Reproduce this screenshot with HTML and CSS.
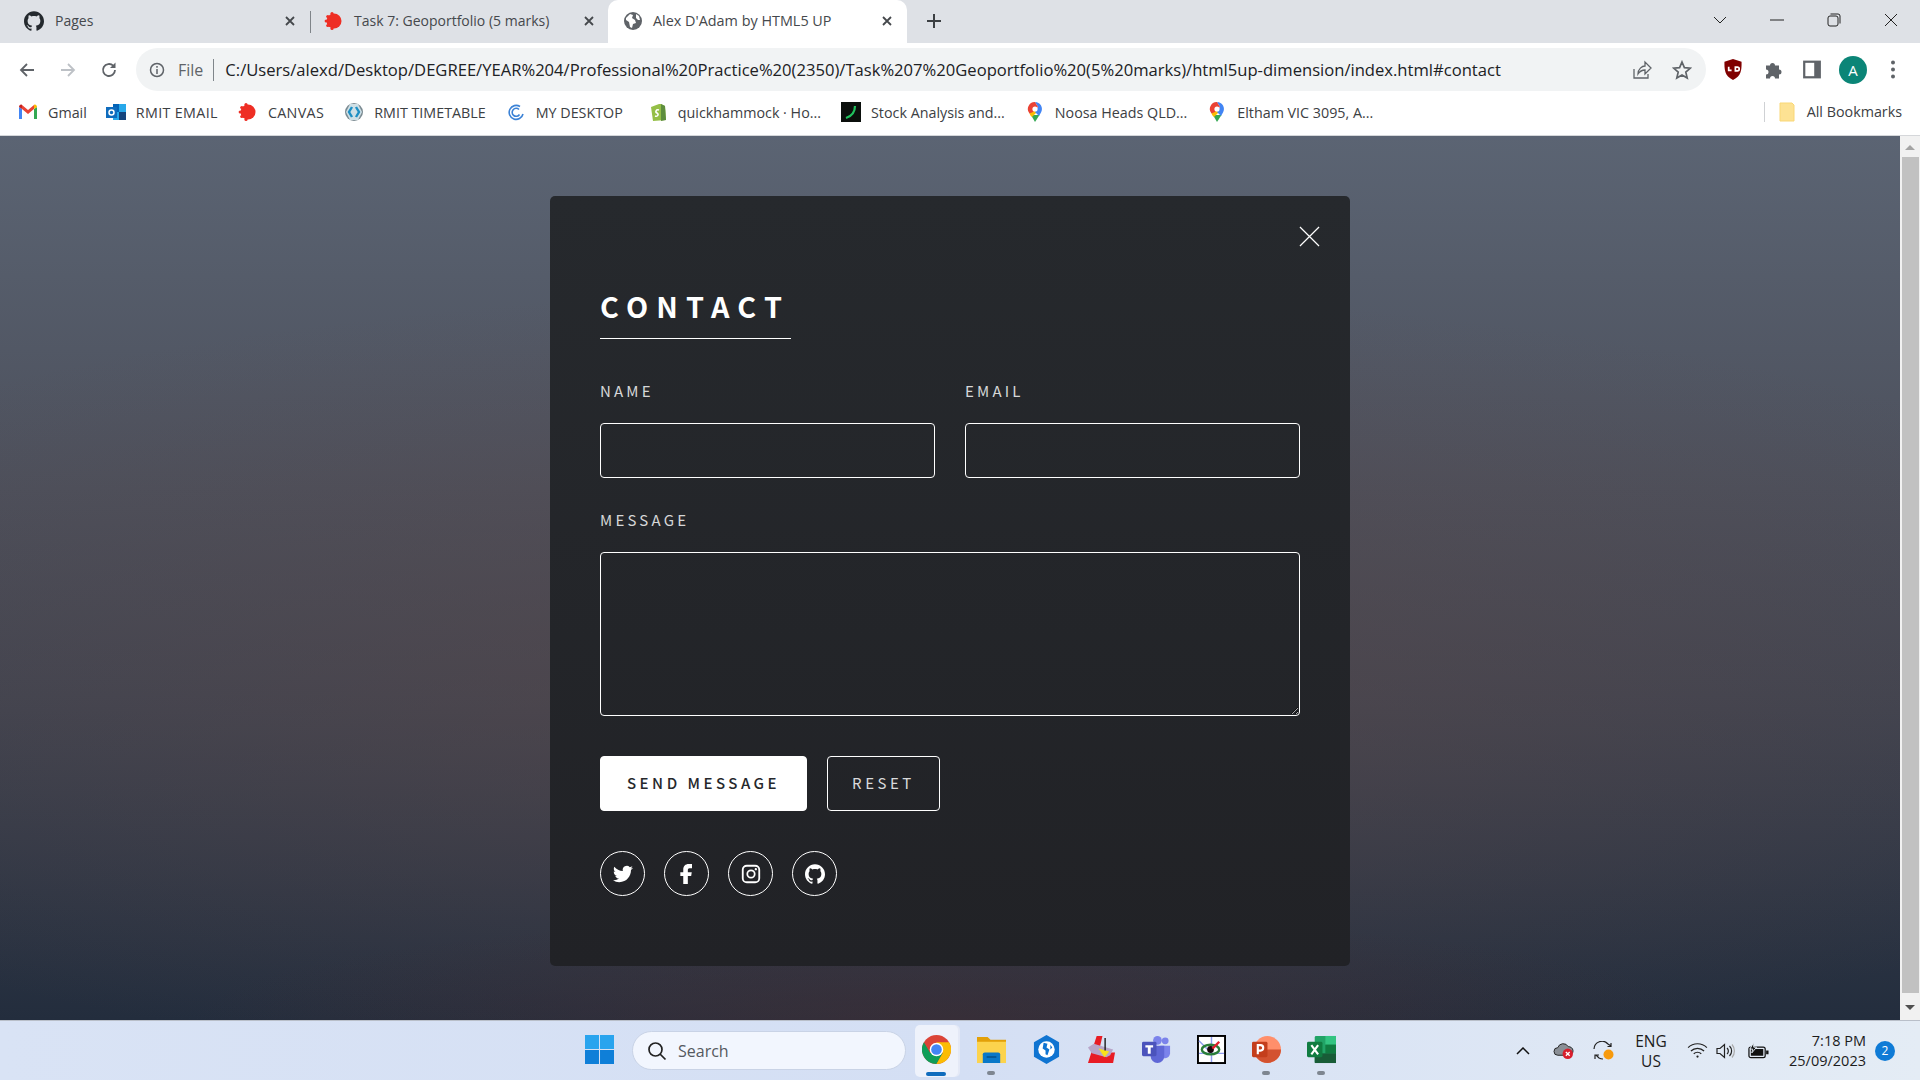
FILE: index.html
```html
<!DOCTYPE html>
<html lang="en">
<head>
  <meta charset="UTF-8" />
  <title>Alex D'Adam by HTML5 UP</title>
  <link rel="stylesheet" href="styles.css">
</head>
<body>

  <!-- tab strip -->
  <div class="tabbar">
    <div class="tab first">
      <svg class="tab-icon" viewBox="0 0 24 24"><path fill="#24292e" d="M12 .297c-6.63 0-12 5.373-12 12 0 5.303 3.438 9.8 8.205 11.385.6.113.82-.258.82-.577 0-.285-.01-1.04-.015-2.04-3.338.724-4.042-1.61-4.042-1.61C4.422 18.07 3.633 17.7 3.633 17.7c-1.087-.744.084-.729.084-.729 1.205.084 1.838 1.236 1.838 1.236 1.07 1.835 2.809 1.305 3.495.998.108-.776.417-1.305.76-1.605-2.665-.3-5.466-1.332-5.466-5.93 0-1.31.465-2.38 1.235-3.22-.135-.303-.54-1.523.105-3.176 0 0 1.005-.322 3.3 1.23.96-.267 1.98-.399 3-.405 1.02.006 2.04.138 3 .405 2.28-1.552 3.285-1.23 3.285-1.23.645 1.653.24 2.873.12 3.176.765.84 1.23 1.91 1.23 3.22 0 4.61-2.805 5.625-5.475 5.92.42.36.81 1.096.81 2.22 0 1.606-.015 2.896-.015 3.286 0 .315.21.69.825.57C20.565 22.092 24 17.592 24 12.297c0-6.627-5.373-12-12-12"/></svg>
      <span class="tab-title">Pages</span>
      <svg class="tab-close" viewBox="0 0 12 12"><path d="M2 2l8 8M10 2l-8 8"/></svg>
    </div>
    <div class="tab-sep"></div>
    <div class="tab second">
      <svg class="tab-icon" viewBox="0 0 20 20"><use href="#canvas"/></svg>
      <span class="tab-title">Task 7: Geoportfolio (5 marks)</span>
      <svg class="tab-close" viewBox="0 0 12 12"><path d="M2 2l8 8M10 2l-8 8"/></svg>
    </div>
    <div class="tab active">
      <svg class="tab-icon" viewBox="0 0 20 20"><circle cx="10" cy="10" r="9" fill="#5f6368"/><path fill="#fff" d="M3 7l4-4 3 1-1 3 3 2 1 3-3 1-1 4-2-1-1-5-3-2zM13 3l3 2 1 4-2 0-2-2z"/></svg>
      <span class="tab-title">Alex D'Adam by HTML5 UP</span>
      <svg class="tab-close" viewBox="0 0 12 12"><path d="M2 2l8 8M10 2l-8 8"/></svg>
    </div>
    <svg class="new-tab" viewBox="0 0 16 16"><path d="M8 1v14M1 8h14"/></svg>
    <div class="win-controls">
      <svg viewBox="0 0 14 14"><path d="M1 4l6 6 6-6"/></svg>
      <svg viewBox="0 0 14 14"><path d="M0 7h14"/></svg>
      <svg viewBox="0 0 14 14"><rect x="1" y="3" width="10" height="10" rx="2"/><path d="M3.5 1h7.5a2 2 0 0 1 2 2v7.5"/></svg>
      <svg viewBox="0 0 14 14"><path d="M1 1l12 12M13 1L1 13"/></svg>
    </div>
  </div>

  <!-- address bar -->
  <div class="toolbar">
    <svg class="nav-icon" viewBox="0 0 18 18"><path d="M16 9H3M9 3L3 9l6 6"/></svg>
    <svg class="nav-icon off" viewBox="0 0 18 18"><path d="M2 9h13M9 3l6 6-6 6"/></svg>
    <svg class="nav-icon" viewBox="0 0 18 18"><path d="M15 9a6 6 0 1 1-1.8-4.3"/><path class="solid" d="M15.5 1.5v5.5h-5.5z"/></svg>
    <div class="omnibox">
      <svg class="info" viewBox="0 0 16 16"><circle cx="8" cy="8" r="6.5"/><path d="M8 7v5M8 4v1.8"/></svg>
      <span class="scheme">File</span>
      <span class="url">C:/Users/alexd/Desktop/DEGREE/YEAR%204/Professional%20Practice%20(2350)/Task%207%20Geoportfolio%20(5%20marks)/html5up-dimension/index.html#contact</span>
      <svg class="omni-icon share" viewBox="0 0 20 20"><path d="M2 9v9h14v-4M6 14c0-5 4-8 7-8V2l6 6-6 6v-4c-3 0-5 1-7 4z"/></svg>
      <svg class="omni-icon star" viewBox="0 0 20 20"><path d="M10 2l2.4 5.6 6 .5-4.6 4 1.4 6L10 15l-5.2 3.1 1.4-6-4.6-4 6-.5z"/></svg>
    </div>
    <div class="ext-icons">
      <svg viewBox="0 0 20 22"><path fill="#800000" d="M10 0l9 3c0 8 0 15-9 19C1 18 1 11 1 3z"/><path fill="none" stroke="#fff" stroke-width="1.8" d="M5.5 8v4h3M12.5 8.5h2a1.5 1.5 0 0 1 0 4h-2z"/></svg>
      <svg viewBox="0 0 20 20"><path fill="#5f6368" d="M2 6h4a2.5 2.5 0 1 1 5 0h4v4a2.5 2.5 0 1 1 0 5v4h-4a2.5 2.5 0 1 0-5 0H2v-4a2.5 2.5 0 1 0 0-5z"/></svg>
      <svg viewBox="0 0 18 18"><rect x="1" y="1" width="16" height="16" fill="#5f6368"/><rect x="3" y="3" width="8" height="12" fill="#fff"/></svg>
      <div class="avatar">A</div>
      <svg viewBox="0 0 6 20"><circle cx="3" cy="3" r="2" fill="#5f6368"/><circle cx="3" cy="10" r="2" fill="#5f6368"/><circle cx="3" cy="17" r="2" fill="#5f6368"/></svg>
    </div>
  </div>

  <!-- bookmarks -->
  <div class="bookmarks">
    <div class="bookmark gmail">
      <svg viewBox="0 0 20 16"><path fill="#4285f4" d="M1 15V3l3 2v10z"/><path fill="#34a853" d="M19 15V3l-3 2v10z"/><path fill="#ea4335" d="M4 5V1l6 5 6-5v4l-6 5z"/><path fill="#c5221f" d="M1 3c0-2 2-3 3-2v4z"/><path fill="#fbbc04" d="M19 3c0-2-2-3-3-2v4z"/></svg>
      <span>Gmail</span>
    </div>
    <div class="bookmark wide">
      <svg viewBox="0 0 20 20"><rect x="7" y="2" width="13" height="16" fill="#28a8ea"/><rect x="7" y="2" width="6" height="8" fill="#0364b8"/><rect x="13" y="10" width="7" height="8" fill="#14447d"/><rect x="0" y="5" width="11" height="11" fill="#0f6cbd"/><circle cx="5.5" cy="10.5" r="2.5" fill="none" stroke="#fff" stroke-width="1.5"/></svg>
      <span>RMIT EMAIL</span>
    </div>
    <div class="bookmark wide">
      <svg viewBox="0 0 20 20"><use href="#canvas"/></svg>
      <span>CANVAS</span>
    </div>
    <div class="bookmark">
      <svg viewBox="0 0 20 20"><circle cx="10" cy="10" r="9" fill="#7b8b92"/><path fill="#cfe0e6" d="M6 2h8l4 8-4 8H6l-4-8z"/><path fill="none" stroke="#1d8fc4" stroke-width="2.4" d="M8 5l-3 5 3 5M12 5l3 5-3 5"/></svg>
      <span>RMIT TIMETABLE</span>
    </div>
    <div class="bookmark">
      <svg viewBox="0 0 20 20" fill="none" stroke="#3b82d6" stroke-width="1.6"><path d="M14 4.5A7 7 0 1 0 17 12"/><path d="M13 7.5a4 4 0 1 0 .5 5"/></svg>
      <span>MY DESKTOP</span>
    </div>
    <div class="bookmark shop">
      <svg viewBox="0 0 20 20"><path fill="#95bf47" d="M3 5l8-3 2 0 4 2 1 14-13 1z"/><path fill="#5e8e3e" d="M13 2l4 2 1 14-5 1z"/><path fill="none" stroke="#fff" stroke-width="1.6" d="M11 8c-3-1-4 2-2 3s1 4-2 3"/></svg>
      <span>quickhammock · Ho...</span>
    </div>
    <div class="bookmark">
      <svg viewBox="0 0 20 20"><rect width="20" height="20" fill="#0b0f0c"/><path fill="none" stroke="#21c25e" stroke-width="2.2" d="M14 4c0 6-3 10-9 12"/></svg>
      <span>Stock Analysis and...</span>
    </div>
    <div class="bookmark">
      <svg viewBox="0 0 20 20"><use href="#pin"/></svg>
      <span>Noosa Heads QLD...</span>
    </div>
    <div class="bookmark">
      <svg viewBox="0 0 20 20"><use href="#pin"/></svg>
      <span>Eltham VIC 3095, A...</span>
    </div>
    <div class="bookmark all">
      <svg viewBox="0 0 16 20"><path fill="#fde293" stroke="#f9d776" d="M1 1h12l2 2v16H1z"/></svg>
      <span>All Bookmarks</span>
    </div>
  </div>

  <!-- page -->
  <div class="viewport">
    <div class="page">
      <div class="modal">
        <svg class="modal-close" viewBox="0 0 22 22"><path d="M1 1l20 20M21 1L1 21"/></svg>
        <h2>Contact</h2>
        <form>
          <div class="fields">
            <div class="field">
              <label for="name">Name</label>
              <input type="text" id="name" />
            </div>
            <div class="field">
              <label for="email">Email</label>
              <input type="text" id="email" />
            </div>
          </div>
          <label class="message-label" for="message">Message</label>
          <textarea id="message"></textarea>
          <div class="actions">
            <button type="button" class="primary">Send Message</button>
            <button type="button">Reset</button>
          </div>
        </form>
        <div class="socials">
          <a><svg viewBox="0 0 24 24"><path d="M23.953 4.57a10 10 0 01-2.825.775 4.958 4.958 0 002.163-2.723c-.951.555-2.005.959-3.127 1.184a4.92 4.92 0 00-8.384 4.482C7.69 8.095 4.067 6.13 1.64 3.162a4.822 4.822 0 00-.666 2.475c0 1.71.87 3.213 2.188 4.096a4.904 4.904 0 01-2.228-.616v.06a4.923 4.923 0 003.946 4.827 4.996 4.996 0 01-2.212.085 4.936 4.936 0 004.604 3.417 9.867 9.867 0 01-6.102 2.105c-.39 0-.779-.023-1.17-.067a13.995 13.995 0 007.557 2.209c9.053 0 13.998-7.496 13.998-13.985 0-.21 0-.42-.015-.63A9.935 9.935 0 0024 4.59z"/></svg></a>
          <a><svg viewBox="0 0 24 24"><path d="M18 0h-4C10 0 7.5 2.6 7.5 6.5V10H4v4.5h3.5V24H13v-9.500h4l.7-4.500H13V7.500C13 6 13.5 5 15.2 5H18z"/></svg></a>
          <a><svg viewBox="0 0 24 24"><path fill-rule="evenodd" d="M7 1h10a6 6 0 0 1 6 6v10a6 6 0 0 1-6 6H7a6 6 0 0 1-6-6V7a6 6 0 0 1 6-6zm0 2.2A3.8 3.8 0 0 0 3.2 7v10A3.8 3.8 0 0 0 7 20.8h10a3.8 3.8 0 0 0 3.8-3.8V7A3.8 3.8 0 0 0 17 3.2zM12 6.5a5.5 5.5 0 1 1 0 11 5.5 5.5 0 0 1 0-11zm0 2.1a3.4 3.4 0 1 0 0 6.8 3.4 3.4 0 0 0 0-6.8zM17.8 4.8a1.4 1.4 0 1 1 0 2.8 1.4 1.4 0 0 1 0-2.8z"/></svg></a>
          <a><svg viewBox="0 0 24 24"><path d="M12 .297c-6.63 0-12 5.373-12 12 0 5.303 3.438 9.8 8.205 11.385.6.113.82-.258.82-.577 0-.285-.01-1.04-.015-2.04-3.338.724-4.042-1.61-4.042-1.61C4.422 18.07 3.633 17.7 3.633 17.7c-1.087-.744.084-.729.084-.729 1.205.084 1.838 1.236 1.838 1.236 1.07 1.835 2.809 1.305 3.495.998.108-.776.417-1.305.76-1.605-2.665-.3-5.466-1.332-5.466-5.93 0-1.31.465-2.38 1.235-3.22-.135-.303-.54-1.523.105-3.176 0 0 1.005-.322 3.3 1.23.96-.267 1.98-.399 3-.405 1.02.006 2.04.138 3 .405 2.28-1.552 3.285-1.23 3.285-1.23.645 1.653.24 2.873.12 3.176.765.84 1.23 1.91 1.23 3.22 0 4.61-2.805 5.625-5.475 5.92.42.36.81 1.096.81 2.22 0 1.606-.015 2.896-.015 3.286 0 .315.21.69.825.57C20.565 22.092 24 17.592 24 12.297c0-6.627-5.373-12-12-12"/></svg></a>
        </div>
      </div>
    </div>
    <div class="scrollbar">
      <div class="arrow-up"></div>
      <div class="thumb"></div>
      <div class="arrow-down"></div>
    </div>
  </div>

  <!-- windows taskbar -->
  <div class="taskbar">
    <div class="slot">
      <svg class="big" viewBox="0 0 28 28"><path fill="#29a4ee" d="M0 0h13.5v13.5H0z"/><path fill="#29a4ee" d="M14.5 0H28v13.5H14.5z"/><path fill="#0f7fd8" d="M0 14.5h13.5V28H0zM14.5 14.5H28V28H14.5z"/></svg>
    </div>
    <div class="search">
      <svg viewBox="0 0 20 20"><circle cx="8.5" cy="8.5" r="6.5"/><path d="M13 13l5.5 5.5"/></svg>
      <span>Search</span>
    </div>
    <div class="slot current">
      <svg class="big" viewBox="0 0 30 30"><circle cx="15" cy="15" r="15" fill="#db4437"/><path fill="#0f9d58" d="M2 7.5A15 15 0 0 0 15 30l6.5-11.3h-13z"/><path fill="#fbbc04" d="M15 30a15 15 0 0 0 13-22.5H15l6.5 11.2z"/><circle cx="15" cy="15" r="7" fill="#fff"/><circle cx="15" cy="15" r="5.5" fill="#4285f4"/></svg>
      <i class="run-bar"></i>
    </div>
    <div class="slot running">
      <svg class="big" viewBox="0 0 30 28"><path fill="#e3a008" d="M0 1h11l3 3h16v6H0z"/><path fill="#fcd34d" d="M0 6h30v22H0z"/><path fill="#0a78c8" d="M6 19a2 2 0 0 1 2-2h14a2 2 0 0 1 2 2v9H6z"/><path fill="#054f8a" d="M10 21h10v1.5H10z"/></svg>
    </div>
    <div class="slot">
      <svg class="big" viewBox="0 0 28 30"><path fill="#0f74d1" d="M14 0l13 7.5v15L14 30 1 22.5v-15z"/><circle cx="14" cy="15" r="8.5" fill="#fff"/><path fill="#0f74d1" d="M11 8l4 1-1 4 3 2-2 6-2-1 0-4-3-2zM18 10l2 3-2 2z"/></svg>
    </div>
    <div class="slot">
      <svg class="big" viewBox="0 0 30 30"><path fill="#e81c24" d="M10 1h6l-4 17h17l-2 11H1z"/><path fill="#b8a6c9" d="M1 13l6-4 20 6-3 6-4 2-15-4z"/><path fill="#f9e11b" d="M12 14l11 3-5 6z"/><path fill="#222" d="M18 3h1.5v13H18z"/></svg>
    </div>
    <div class="slot">
      <svg class="big" viewBox="0 0 30 28"><circle cx="24" cy="5" r="3.5" fill="#7b83eb"/><circle cx="16" cy="4.5" r="4.5" fill="#7b83eb"/><path fill="#7b83eb" d="M19 10h10v8a5 5 0 0 1-5 5h-3z"/><path fill="#5f67d6" d="M9 10h14v11a7 7 0 0 1-14 0z"/><rect y="6" width="15" height="15" rx="1.5" fill="#4b53bc"/><path fill="#fff" d="M3.5 9.5h8V12H9v6.5H6V12H3.5z"/></svg>
    </div>
    <div class="slot">
      <svg class="big" viewBox="0 0 30 30"><rect x="1" y="1" width="28" height="28" fill="#fff" stroke="#000" stroke-width="2"/><path fill="none" stroke="#8f9cf0" stroke-width="1.5" d="M2 6l9 9M15 2v26M2 19h26"/><ellipse cx="14" cy="15" rx="9" ry="5" fill="none" stroke="#2a7d3a" stroke-width="2.5"/><circle cx="14" cy="15" r="3.5" fill="#15060a"/><path stroke="#e0202c" stroke-width="2.5" d="M16 14l7-7"/></svg>
    </div>
    <div class="slot running">
      <svg class="big" viewBox="0 0 30 30"><circle cx="16" cy="15" r="14" fill="#ff8f6b"/><path fill="#d35230" d="M16 15h14a14 14 0 0 1-28 0z"/><rect y="7" width="16" height="16" rx="1.5" fill="#c43e1c"/><path fill="none" stroke="#fff" stroke-width="2.2" d="M6 20V10.5h2.8a2.8 2.8 0 0 1 0 5.6H6"/></svg>
    </div>
    <div class="slot running">
      <svg class="big" viewBox="0 0 30 30"><rect x="8" y="1" width="22" height="28" rx="1.5" fill="#21a366"/><rect x="19" y="1" width="11" height="9" fill="#33c481"/><rect x="19" y="10" width="11" height="9" fill="#107c41"/><rect x="8" y="19" width="22" height="10" fill="#185c37"/><rect y="7" width="16" height="16" rx="1.5" fill="#107c41"/><path fill="none" stroke="#fff" stroke-width="2.2" d="M4.5 10.5l7 9.5M11.5 10.5l-7 9.5"/></svg>
    </div>

    <div class="tray">
      <svg class="tray-chevron" viewBox="0 0 14 8"><path d="M1 7l6-6 6 6"/></svg>
      <svg class="tray-cloud" viewBox="0 0 22 20"><path fill="#8a8f96" stroke="#222" d="M5 15a4 4 0 0 1 0-8 6 6 0 0 1 11-1 4.5 4.5 0 0 1 1 9z"/><circle cx="15.5" cy="13.5" r="5.5" fill="#d81e2c"/><path stroke="#fff" stroke-width="1.4" d="M13.5 11.5l4 4M17.5 11.5l-4 4"/></svg>
      <svg class="tray-sync" viewBox="0 0 22 20"><path fill="none" stroke="#222" stroke-width="1.2" d="M1 8a8 8 0 0 1 14-5l3 2M18 2v3.5h-3.5M3 14l3 3a8 8 0 0 0 4 1M2 18v-4h4"/><circle cx="15.5" cy="13.5" r="5" fill="#f79a0d"/></svg>
      <div class="lang"><span>ENG</span><span>US</span></div>
      <svg class="tray-wifi" viewBox="0 0 22 16" fill="none" stroke="#222" stroke-width="1.3"><path d="M1 5a14 14 0 0 1 20 0M4 8.5a10 10 0 0 1 14 0M7 11.5a6 6 0 0 1 8 0"/><circle cx="11" cy="14.5" r="1.2" fill="#222" stroke="none"/></svg>
      <svg class="tray-sound" viewBox="0 0 20 16" fill="none" stroke="#222" stroke-width="1.2"><path d="M1 5.5h3L8.5 1.5v13L4 10.5H1z"/><path d="M11 5a4 4 0 0 1 0 6M13.5 3a7 7 0 0 1 0 10"/><path stroke="#aaa" d="M16 1.5a10 10 0 0 1 0 13"/></svg>
      <svg class="tray-battery" viewBox="0 0 22 18"><rect x="1" y="5" width="17" height="11" rx="2" fill="none" stroke="#111" stroke-width="1.3"/><path fill="#111" d="M3 7h13v7H3zM19 8.5h2.5v4H19z"/><path fill="#111" stroke="#e3ebf5" d="M6 0L2 7h3l-1 4 5-6H6z"/></svg>
      <div class="clock"><span>7:18 PM</span><span>25/09/2023</span></div>
      <div class="badge">2</div>
    </div>
  </div>

  <!-- shared icons -->
  <svg class="defs" width="0" height="0">
    <symbol id="canvas" viewBox="0 0 20 20">
      <circle cx="10" cy="10" r="7.5" fill="#ee2e24"/>
      <circle cx="2.2" cy="10" r="1.6" fill="#ee2e24"/><circle cx="3.8" cy="5.5" r="1.6" fill="#ee2e24"/><circle cx="3.8" cy="14.5" r="1.6" fill="#ee2e24"/>
      <circle cx="8" cy="2.5" r="1.6" fill="#ee2e24"/><circle cx="8" cy="17.5" r="1.6" fill="#ee2e24"/>
    </symbol>
    <symbol id="pin" viewBox="0 0 20 20">
      <path fill="#34a853" d="M6 13l4 7 4.5-7z"/>
      <path fill="#fbbc04" d="M4.5 11.5A7 7 0 0 0 7 15l5-5-3-3z"/>
      <path fill="#4285f4" d="M10 0a7 7 0 0 1 6 10.5L14 14l-4-4 3-5z"/>
      <path fill="#ea4335" d="M4.5 11.5A7 7 0 0 1 10 0l3 5-5 5z"/>
      <circle cx="10" cy="7" r="2.6" fill="#fff"/>
    </symbol>
  </svg>

</body>
</html>
```

FILE: styles.css
```css
* {
  box-sizing: border-box;
}
body, html {
  margin: 0;
  padding: 0;
  height: 100%;
  overflow: hidden;
}
body {
  display: flex;
  flex-direction: column;
  font-family: 'Open Sans', 'Noto Sans', sans-serif;
  color: #3c4043;
}
svg {
  flex: none;
  display: block;
}
.defs {
  position: absolute;
}

/* tabs */
.tabbar {
  height: 43px;
  flex: none;
  display: flex;
  align-items: stretch;
  background: #dee1e6;
}
.tab {
  display: flex;
  align-items: center;
  padding-bottom: 2px;
}
.tab.first {
  width: 310px;
  padding-left: 24px;
  padding-right: 14px;
}
.tab.second {
  width: 297px;
  padding-left: 13px;
  padding-right: 13px;
}
.tab.active {
  width: 299px;
  padding-left: 15px;
  padding-right: 14px;
  background: #fff;
  border-radius: 10px 10px 0 0;
}
.tab-sep {
  width: 1px;
  margin: 11px 0 10px;
  background: #7f8489;
}
.tab-icon {
  width: 20px;
  height: 20px;
  margin-right: 10px;
}
.tab.first .tab-icon {
  margin-right: 11px;
}
.tab-title {
  flex: 1;
  font-size: 14px;
  color: #45484c;
  white-space: nowrap;
}
.tab.active .tab-title {
  font-size: 14.4px;
}
.tab-close {
  width: 12px;
  height: 12px;
  fill: none;
  stroke: #45484c;
  stroke-width: 1.8;
}
.new-tab {
  width: 16px;
  height: 16px;
  margin: 13px 0 0 19px;
  fill: none;
  stroke: #3c4043;
  stroke-width: 2;
}
.win-controls {
  margin-left: auto;
  display: flex;
  align-items: center;
  gap: 43px;
  padding: 0 22px 4px 0;
}
.win-controls svg {
  width: 14px;
  height: 14px;
  fill: none;
  stroke: #222;
  stroke-width: 1;
}

/* toolbar */
.toolbar {
  height: 54px;
  flex: none;
  display: flex;
  align-items: center;
  padding: 5px 0 6px 18px;
  background: #fff;
}
.nav-icon {
  width: 18px;
  height: 18px;
  margin-right: 23px;
  fill: none;
  stroke: #5f6368;
  stroke-width: 1.8;
}
.nav-icon.off {
  stroke: #bdc1c6;
}
.nav-icon .solid {
  fill: #5f6368;
  stroke: none;
}
.omnibox {
  width: 1570px;
  height: 43px;
  margin-left: -5px;
  display: flex;
  align-items: center;
  padding: 0 14px 0 13px;
  background: #f1f3f4;
  border-radius: 22px;
}
.info {
  width: 16px;
  height: 16px;
  fill: none;
  stroke: #5f6368;
  stroke-width: 1.5;
}
.scheme {
  margin-left: 13px;
  padding-right: 10px;
  border-right: 1px solid #80868b;
  font-size: 16px;
  line-height: 22px;
  color: #5f6368;
}
.url {
  flex: 1;
  margin-left: 11px;
  font-size: 16.6px;
  color: #202124;
  white-space: nowrap;
}
.omni-icon {
  width: 20px;
  height: 20px;
  fill: none;
  stroke: #5f6368;
  stroke-width: 1.3;
}
.star {
  margin-left: 20px;
  stroke-width: 1.7;
}
.ext-icons {
  display: flex;
  align-items: center;
  margin-left: 17px;
}
.ext-icons svg {
  width: 20px;
  height: 21px;
  margin-right: 21px;
}
.ext-icons svg:nth-child(2) {
  margin-right: 18px;
}
.ext-icons svg:last-child {
  width: 6px;
  margin: 0 0 0 23px;
}
.avatar {
  width: 28px;
  height: 28px;
  margin-left: -4px;
  border-radius: 50%;
  background: #0b8577;
  color: #fff;
  font-size: 15px;
  line-height: 28px;
  text-align: center;
}

/* bookmarks */
.bookmarks {
  height: 39px;
  flex: none;
  display: flex;
  align-items: center;
  gap: 20px;
  padding: 0 18px 8px 18px;
  background: #fff;
  border-bottom: 1px solid #d5d7da;
}
.bookmark {
  display: flex;
  align-items: center;
  gap: 10px;
  font-size: 14.3px;
  color: #3c4043;
  white-space: nowrap;
}
.bookmark svg {
  width: 20px;
  height: 20px;
}
.bookmark.gmail {
  margin-right: -1px;
}
.bookmark.wide span {
  letter-spacing: 0.35px;
}
.bookmark.shop {
  margin-left: 5px;
}
.bookmark.all {
  margin-left: auto;
  padding-left: 12px;
  border-left: 1px solid #cfd1d4;
  line-height: 20px;
}

/* page + modal */
.viewport {
  flex: 1;
  display: flex;
  min-height: 0;
}
.page {
  flex: 1;
  display: flex;
  justify-content: center;
  align-items: flex-start;
  padding-top: 60px;
  background:
    radial-gradient(ellipse 40% 12% at 50% 100%, rgba(70, 45, 50, 0.5), rgba(70, 45, 50, 0) 100%),
    radial-gradient(ellipse 75% 45% at 48% 62%, rgba(92, 72, 72, 0.55), rgba(92, 72, 72, 0) 100%),
    linear-gradient(180deg, #5b6473 0%, #4c505c 40%, #3e4350 65%, #232d3d 100%);
}
.modal {
  position: relative;
  width: 800px;
  height: 770px;
  padding: 89px 50px 0;
  background: linear-gradient(180deg, #26292d, #212226);
  border-radius: 5px;
  color: #fff;
  font-family: 'Noto Sans CJK SC', 'Noto Sans', sans-serif;
}
.modal-close {
  position: absolute;
  top: 30px;
  right: 30px;
  width: 21px;
  height: 21px;
  fill: none;
  stroke: #fff;
  stroke-width: 1.3;
}
.modal h2 {
  width: 191px;
  margin: 0 0 39px;
  padding-bottom: 11px;
  border-bottom: 1px solid #fff;
  font-size: 28.8px;
  font-weight: 700;
  line-height: 42px;
  letter-spacing: 8.2px;
  text-transform: uppercase;
}
.fields {
  display: flex;
  gap: 30px;
}
.field {
  flex: 1;
}
.modal label {
  display: block;
  margin-bottom: 19px;
  font-size: 15px;
  line-height: 26px;
  letter-spacing: 3.2px;
  text-transform: uppercase;
  color: #d6d7d8;
}
.modal .message-label {
  margin: 29px 0 19px;
}
.modal input, .modal textarea {
  display: block;
  width: 100%;
  background: transparent;
  border: 1px solid #fff;
  border-radius: 4px;
  outline: none;
}
.modal input {
  height: 55px;
}
.modal textarea {
  height: 164px;
  resize: vertical;
}
.actions {
  display: flex;
  gap: 20px;
  margin-top: 40px;
}
.actions button {
  height: 55px;
  padding: 0 24px 2px;
  background: transparent;
  border: 1px solid #fff;
  border-radius: 4px;
  color: #d9dadb;
  font-family: inherit;
  font-size: 15px;
  letter-spacing: 3.5px;
  text-transform: uppercase;
}
.actions .primary {
  padding: 0 26px 2px;
  background: #fff;
  color: #26282c;
  font-weight: 500;
}
.socials {
  display: flex;
  gap: 19px;
  margin-top: 40px;
}
.socials a {
  width: 45px;
  height: 45px;
  display: flex;
  align-items: center;
  justify-content: center;
  border: 1px solid #fff;
  border-radius: 50%;
}
.socials svg {
  width: 20px;
  height: 20px;
  fill: #fff;
}

/* scrollbar */
.scrollbar {
  width: 20px;
  flex: none;
  display: flex;
  flex-direction: column;
  align-items: center;
  background: #f1f1f1;
}
.arrow-up, .arrow-down {
  width: 0;
  height: 0;
  border-left: 5px solid transparent;
  border-right: 5px solid transparent;
}
.arrow-up {
  margin: 9px 0 7px;
  border-bottom: 5px solid #a3a3a3;
}
.arrow-down {
  margin-top: 12px;
  border-top: 5px solid #505050;
}
.thumb {
  width: 17px;
  height: 836px;
  background: #c1c1c1;
}

/* taskbar */
.taskbar {
  height: 60px;
  flex: none;
  display: flex;
  align-items: center;
  padding-left: 572px;
  background: linear-gradient(90deg, #d9e3f5, #d4dff4 50%, #e4ecf5);
  border-top: 1px solid #b9bfc9;
}
.slot {
  position: relative;
  width: 55px;
  height: 52px;
  display: flex;
  align-items: center;
  justify-content: center;
  padding-bottom: 2px;
}
.big {
  width: 29px;
  height: 29px;
}
.slot.current {
  width: 43px;
  margin: 0 6px;
  background: #eef2fb;
  border-radius: 5px;
  box-shadow: 2px 0 0 #e4e9f6;
}
.run-bar {
  position: absolute;
  bottom: 1px;
  left: 11px;
  width: 20px;
  height: 4px;
  background: #0f6cbd;
  border-radius: 2px;
}
.slot.running::after {
  content: "";
  position: absolute;
  bottom: 2px;
  left: 23px;
  width: 8px;
  height: 4px;
  background: #7e8690;
  border-radius: 2px;
}
.search {
  width: 274px;
  height: 39px;
  margin: 0 3px 0 5px;
  display: flex;
  align-items: center;
  gap: 11px;
  padding-left: 14px;
  background: #f2f6fe;
  border: 1px solid #c9d3e6;
  border-radius: 20px;
  font-size: 16px;
  color: #55595f;
}
.search svg {
  width: 20px;
  height: 20px;
  fill: none;
  stroke: #222;
  stroke-width: 1.7;
}
.tray {
  margin-left: auto;
  display: flex;
  align-items: center;
  padding-right: 25px;
  font-size: 14.5px;
  color: #1c1c1c;
}
.tray-chevron {
  width: 14px;
  height: 8px;
  margin-right: 23px;
  fill: none;
  stroke: #111;
  stroke-width: 1.5;
}
.tray-cloud {
  width: 21px;
  height: 19px;
  margin-right: 19px;
}
.tray-sync {
  width: 22px;
  height: 20px;
  margin-right: 19px;
}
.lang {
  width: 34px;
  display: flex;
  flex-direction: column;
  align-items: center;
  font-size: 15.5px;
  line-height: 20px;
  margin-right: 19px;
}
.tray-wifi {
  width: 21px;
  height: 15px;
  margin-right: 8px;
}
.tray-sound {
  width: 20px;
  height: 16px;
  margin-right: 12px;
}
.tray-battery {
  width: 21px;
  height: 18px;
}
.clock {
  width: 85px;
  margin-left: 12px;
  display: flex;
  flex-direction: column;
  align-items: flex-end;
  line-height: 20px;
  white-space: nowrap;
}
.badge {
  width: 20px;
  height: 20px;
  margin-left: 9px;
  border-radius: 50%;
  background: #0f7bd6;
  color: #fff;
  font-size: 12px;
  line-height: 20px;
  text-align: center;
}
```
